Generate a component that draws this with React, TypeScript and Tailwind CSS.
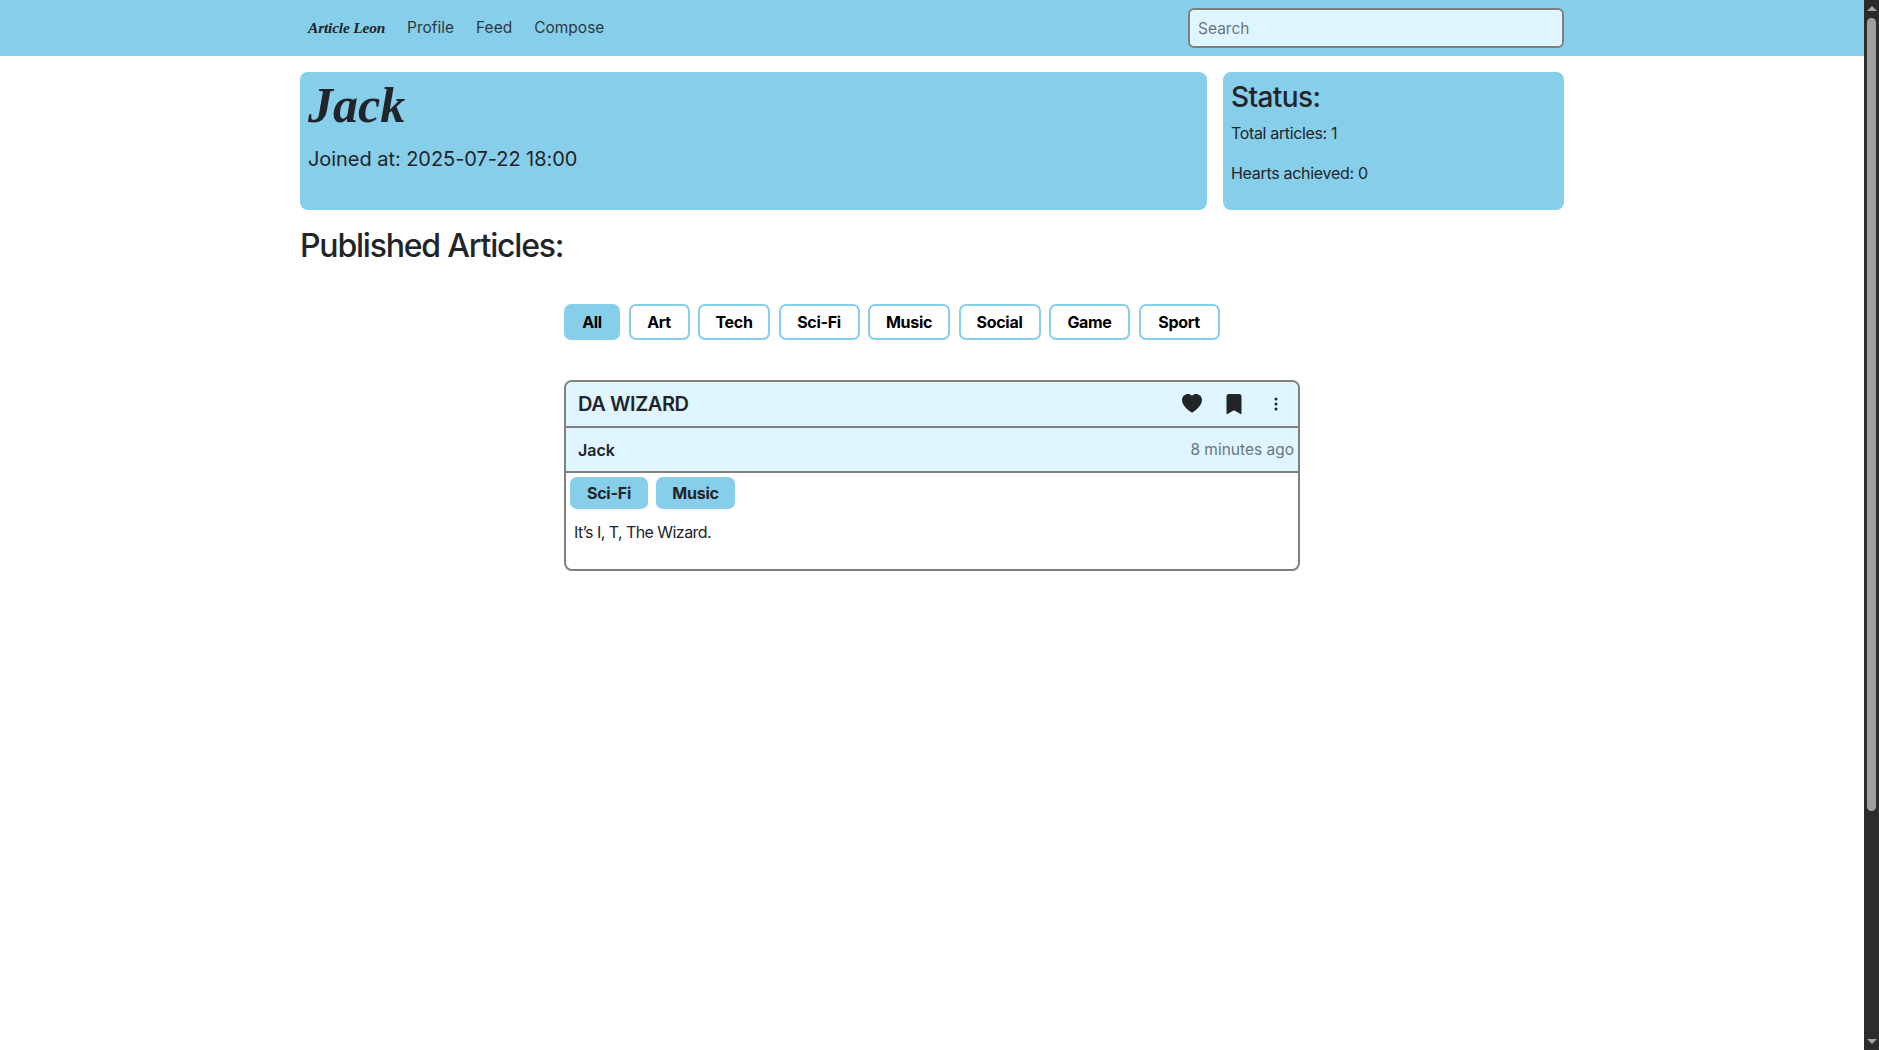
const filters = [
  { name: 'All', width: 'w-[56px]' },
  { name: 'Art', width: 'w-[61px]' },
  { name: 'Tech', width: 'w-[72px]' },
  { name: 'Sci-Fi', width: 'w-[81px]' },
  { name: 'Music', width: 'w-[82px]' },
  { name: 'Social', width: 'w-[82px]' },
  { name: 'Game', width: 'w-[81px]' },
  { name: 'Sport', width: 'w-[81px]' },
];
const scriptFont = "font-['Liberation_Serif',serif] italic font-bold";

function Scrollbar() {
  return (
    <div className="w-[15px] h-[1050px] bg-[#2c2c2c] flex flex-col items-center shrink-0">
      <div className="mt-[6px] w-0 h-0 border-x-[5px] border-x-transparent border-b-[5px] border-b-[#a3a3a3]" />
      <div className="mt-[7px] w-[9px] h-[793px] rounded-t-[5px] rounded-b-[5px] bg-[#9f9f9f]" />
      <div className="mt-auto mb-[6px] w-0 h-0 border-x-[5px] border-x-transparent border-t-[5px] border-t-[#a3a3a3]" />
    </div>
  );
}

export default function App() {
  return (
    <div className="flex h-[1050px] overflow-hidden bg-white text-[#212529] font-['Inter',sans-serif]">
      <div className="flex-1 min-w-0">
        <nav className="h-14 bg-[#87ceeb] flex justify-center">
          <div className="w-[1264px] flex items-center pl-[8px]">
            <span className={`${scriptFont} text-[15.5px] w-[99px] tracking-[-0.2px]`}>Article Leon</span>
            <div className="flex gap-[22px] text-[15.5px] text-[#2b3a40]">
              <span>Profile</span>
              <span>Feed</span>
              <span>Compose</span>
            </div>
            <input
              placeholder="Search"
              className="ml-auto w-[376px] h-10 rounded-[6px] border-2 border-[#808080] bg-[#dff5ff] px-2 text-[15.5px] placeholder:text-[#6c757d]"
            />
          </div>
        </nav>

        <main className="w-[1264px] mx-auto">
          <div className="flex gap-4 mt-4 h-[138px]">
            <section className="flex-1 bg-[#87ceeb] rounded-lg px-2">
              <h1 className={`${scriptFont} text-[50px] leading-[66px]`}>Jack</h1>
              <p className="text-[20px] mt-[6px] tracking-[-0.05px]">Joined at: 2025-07-22 18:00</p>
            </section>
            <section className="w-[341px] bg-[#87ceeb] rounded-lg px-2 pt-[8px]">
              <h2 className="text-[28px] leading-[34px] font-medium tracking-[-0.6px]">Status:</h2>
              <p className="text-[16px] mt-[7px] leading-6 tracking-[-0.35px]">Total articles: 1</p>
              <p className="text-[16px] mt-4 leading-6 tracking-[-0.3px]">Hearts achieved: 0</p>
            </section>
          </div>

          <h2 className="text-[32px] leading-[38px] font-medium mt-[17px] tracking-[-1.2px]">Published Articles:</h2>

          <div className="w-[736px] mx-auto mt-[39px]">
            <div className="flex gap-[8.5px]">
              {filters.map((f, i) => (
                <button
                  key={f.name}
                  type="button"
                  className={`h-9 ${f.width} rounded-[7px] border-2 border-[#87ceeb] text-[16px] font-bold text-black tracking-[-0.3px] ${i === 0 ? 'bg-[#87ceeb]' : 'bg-white'}`}
                >
                  {f.name}
                </button>
              ))}
            </div>

            <article className="mt-[40px] h-[191px] border-2 border-[#808080] rounded-lg overflow-hidden">
              <header className="h-[46px] bg-[#dff5ff] border-b-2 border-[#808080] flex items-center pl-[12px] pr-[14px]">
                <h3 className="text-[20px] font-semibold tracking-[-0.4px]">DA WIZARD</h3>
                <div className="ml-auto flex items-center">
                  <svg width="22" height="20" viewBox="0 0 16 16" fill="currentColor">
                    <path fillRule="evenodd" d="M8 1.314C12.438-3.248 23.534 4.735 8 15-7.534 4.736 3.562-3.248 8 1.314" />
                  </svg>
                  <svg className="ml-[21px]" width="20" height="22" viewBox="0 0 16 16" fill="currentColor">
                    <path d="M2 2v13.5a.5.5 0 0 0 .74.439L8 13.069l5.26 2.87A.5.5 0 0 0 14 15.5V2a2 2 0 0 0-2-2H4a2 2 0 0 0-2 2" />
                  </svg>
                  <svg className="ml-[24px]" width="16" height="16" viewBox="0 0 16 16" fill="currentColor">
                    <path d="M9.5 13a1.5 1.5 0 1 1-3 0 1.5 1.5 0 0 1 3 0m0-5a1.5 1.5 0 1 1-3 0 1.5 1.5 0 0 1 3 0m0-5a1.5 1.5 0 1 1-3 0 1.5 1.5 0 0 1 3 0" />
                  </svg>
                </div>
              </header>
              <div className="h-[45px] bg-[#dff5ff] border-b-2 border-[#808080] flex items-center justify-between pl-[12px] pr-[4px]">
                <span className="text-[16px] font-semibold">Jack</span>
                <span className="text-[15.5px] text-[#6c757d]">8 minutes ago</span>
              </div>
              <div className="flex gap-2 pl-[4px] pt-[4px]">
                <span className="h-8 w-[78px] justify-center rounded-[7px] bg-[#87ceeb] flex items-center text-[16px] font-bold tracking-[-0.2px]">Sci-Fi</span>
                <span className="h-8 w-[79px] justify-center rounded-[7px] bg-[#87ceeb] flex items-center text-[16px] font-bold tracking-[-0.2px]">Music</span>
              </div>
              <p className="text-[16px] pl-2 mt-[11px] leading-6 tracking-[-0.55px]">It’s I, T, The Wizard.</p>
            </article>
          </div>
        </main>
      </div>
      <Scrollbar />
    </div>
  );
}
